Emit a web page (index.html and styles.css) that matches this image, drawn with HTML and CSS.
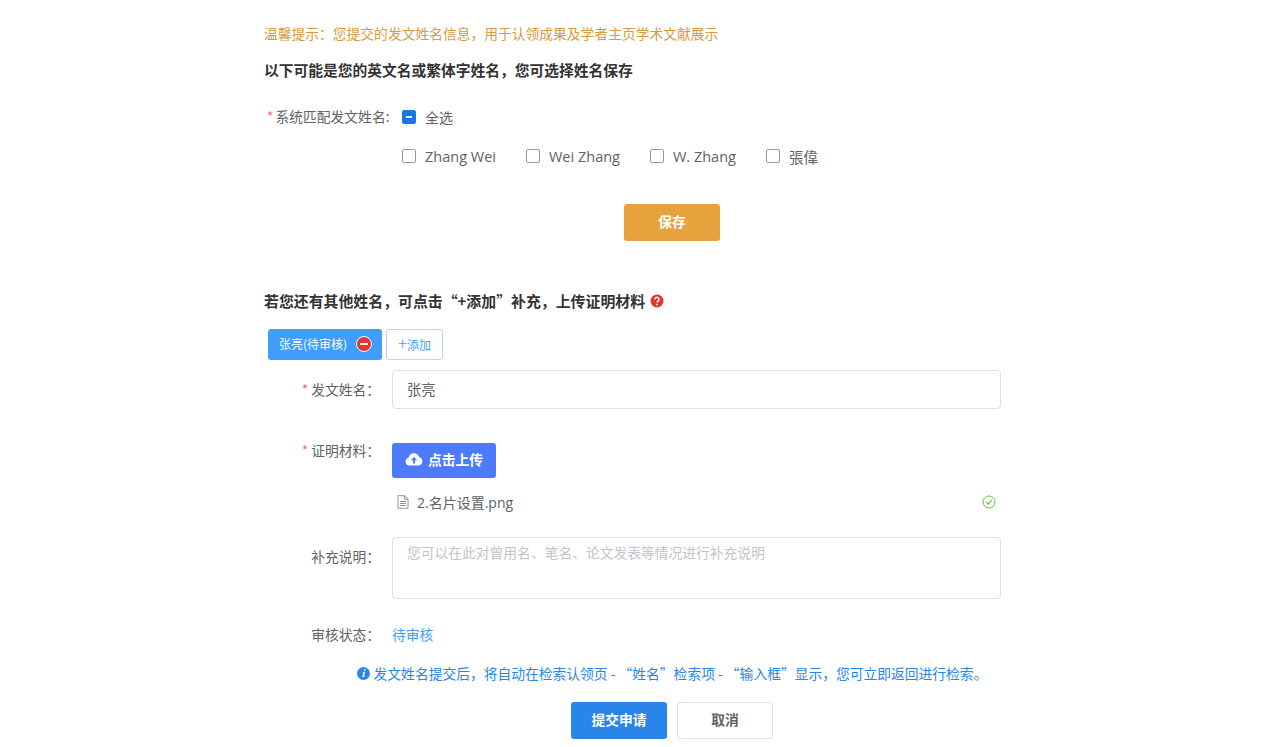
FILE: index.html
```html
<!DOCTYPE html>
<html lang="zh-CN">
<head>
  <meta charset="UTF-8">
  <meta name="viewport" content="width=device-width, initial-scale=1">
  <title>发文姓名</title>
  <link rel="stylesheet" href="styles.css">
</head>
<body>
  <div class="page">
    <p class="tip">温馨提示：您提交的发文姓名信息，用于认领成果及学者主页学术文献展示</p>
    <h2 class="title title-first">以下可能是您的英文名或繁体字姓名，您可选择姓名保存</h2>

    <div class="match-row">
      <div class="match-label"><span class="star">*</span> 系统匹配发文姓名:</div>
      <div class="match-body">
        <label class="check check-all"><span class="box box-on"></span>全选</label>
        <div class="check-list">
          <label class="check"><span class="box"></span>Zhang Wei</label>
          <label class="check"><span class="box"></span>Wei Zhang</label>
          <label class="check"><span class="box"></span>W. Zhang</label>
          <label class="check"><span class="box"></span>張偉</label>
        </div>
      </div>
    </div>

    <div class="btn-line btn-line-save">
      <button class="btn btn-save">保存</button>
    </div>

    <h2 class="title title-second">若您还有其他姓名，可点击“+添加”补充，上传证明材料
      <svg class="help" width="14" height="14" viewBox="0 0 14 14">
        <circle cx="7" cy="7" r="6.5" fill="#dd3730"/>
        <path d="M5 5.4a2 2 0 1 1 3.1 1.6c-.7.5-1.1.8-1.1 1.6" fill="none" stroke="#fff" stroke-width="1.5"/>
        <circle cx="7" cy="10.6" r=".9" fill="#fff"/>
      </svg>
    </h2>

    <div class="tabs">
      <div class="tab-active">张亮(待审核)
        <svg class="tab-del" width="16" height="16" viewBox="0 0 16 16">
          <circle cx="8" cy="8" r="7.5" fill="#dd3730" stroke="#fff"/>
          <rect x="4" y="7" width="8" height="2" rx="1" fill="#fff"/>
        </svg>
      </div>
      <button class="tab-add"><span class="plus">+</span>添加</button>
    </div>

    <div class="form-row row-name">
      <div class="form-label"><span class="star">*</span> 发文姓名：</div>
      <div class="field">
        <input class="input" type="text" value="张亮">
      </div>
    </div>

    <div class="form-row row-upload">
      <div class="form-label"><span class="star">*</span> 证明材料：</div>
      <div class="field">
        <button class="btn-upload">
          <svg width="18" height="14" viewBox="0 0 18 14">
            <path d="M4.4 13.5A3.9 3.9 0 0 1 3.6 5.8 5.4 5.4 0 0 1 14 4.9a4.4 4.4 0 0 1-.3 8.6z" fill="#fff"/>
            <path d="M9 4.8 5.9 8.2h2.1v3.2h2V8.200h2.100z" fill="#4c7bfb"/>
          </svg>
          点击上传
        </button>
        <div class="file-row">
          <svg width="12" height="14" viewBox="0 0 12 14" fill="none" stroke="#909399">
            <path d="M1 .7h6.500L11 4.200v9.100H1z"/>
            <path d="M7.500.7v3.500H11M3 6.500h6M3 8.500h6M3 10.500h6"/>
          </svg>
          <span class="file-name">2.名片设置.png</span>
          <svg class="file-ok" width="14" height="14" viewBox="0 0 14 14" fill="none" stroke="#67c23a">
            <circle cx="7" cy="7" r="6"/>
            <path d="M4.200 7.200 6.200 9.200 9.900 5.200" stroke-width="1.200"/>
          </svg>
        </div>
      </div>
    </div>

    <div class="form-row row-remark">
      <div class="form-label">补充说明：</div>
      <div class="field">
        <textarea class="textarea" placeholder="您可以在此对曾用名、笔名、论文发表等情况进行补充说明"></textarea>
      </div>
    </div>

    <div class="form-row row-status">
      <div class="form-label">审核状态：</div>
      <div class="field status-text">待审核</div>
    </div>

    <p class="note">
      <svg width="13" height="13" viewBox="0 0 13 13">
        <circle cx="6.500" cy="6.500" r="6.500" fill="#2a85e9"/>
        <path d="M7.100 2.300h1.500l-.3 1.400H6.800zM6.500 5h1.500l-1 4.200h.8l-.2.9H5.200l1-4.200h-.7z" fill="#fff"/>
      </svg>
      发文姓名提交后，将自动在检索认领页 - “姓名”检索项 - “输入框”显示，您可立即返回进行检索。
    </p>

    <div class="btn-line btn-line-submit">
      <button class="btn btn-submit">提交申请</button>
      <button class="btn btn-cancel">取消</button>
    </div>
  </div>
</body>
</html>
```

FILE: styles.css
```css
html, body {
  margin: 0;
  padding: 0;
  background: #fff;
  font-family: "Noto Sans CJK SC", "Open Sans", sans-serif;
  font-size: 13.77px;
  color: #606266;
  overflow: hidden;
}
button, input, textarea {
  font-family: inherit;
}
.page {
  width: 816px;
  margin-left: 264px;
  padding-top: 23px;
}
.tip {
  margin: 0;
  line-height: 20px;
  color: #d99a3c;
}
.title {
  margin: 0;
  font-size: 14.76px;
  line-height: 22px;
  font-weight: 700;
  color: #333;
}
.title-first {
  margin-top: 16px;
}
.title-second {
  margin-top: 49px;
  display: flex;
  align-items: center;
  gap: 5px;
  font-size: 14.9px;
}
.star {
  color: #f56c6c;
}

/* 系统匹配 */
.match-row {
  display: flex;
  margin-top: 26px;
}
.match-label {
  width: 138px;
  padding-left: 3px;
  box-sizing: border-box;
  line-height: 18px;
  white-space: nowrap;
}
.match-label .star {
  margin-right: -1px;
}
.match-body {
  display: flex;
  flex-direction: column;
  gap: 19px;
}
.check {
  display: flex;
  align-items: center;
  height: 20px;
  font-family: "Open Sans", "Noto Sans CJK SC", sans-serif;
  font-size: 14.5px;
  color: #606266;
}
.check-all {
  font-size: 14px;
}
.check-list {
  display: flex;
  gap: 30px;
}
.box {
  width: 12px;
  height: 12px;
  margin-right: 9px;
  border: 1px solid #999;
  border-radius: 2px;
  background: #fff;
  position: relative;
}
.box-on {
  background: #1677e6;
  border-color: #1677e6;
}
.box-on::after {
  content: "";
  position: absolute;
  left: 3px;
  top: 5px;
  width: 6px;
  height: 2px;
  background: #fff;
}

/* 按钮 */
.btn-line {
  display: flex;
  justify-content: center;
  gap: 10px;
}
.btn-line-save {
  margin-top: 38px;
}
.btn-line-submit {
  margin-top: 19px;
}
.btn {
  width: 96px;
  height: 37px;
  padding: 0 0 3px;
  border: 1px solid transparent;
  border-radius: 3px;
  font-size: 13.77px;
  font-weight: 700;
}
.btn-save {
  background: #e6a23c;
  color: #fff;
}
.btn-submit {
  background: #2a85e9;
  color: #fff;
}
.btn-cancel {
  background: #fff;
  border-color: #dcdfe6;
  color: #606266;
}

/* 标签页 */
.tabs {
  display: flex;
  gap: 4px;
  margin-top: 17px;
  margin-left: 4px;
}
.tab-active {
  display: flex;
  align-items: center;
  justify-content: space-between;
  box-sizing: border-box;
  width: 114px;
  height: 31px;
  padding: 0 10px 2px 11px;
  border-radius: 3px;
  background: #409eff;
  color: #fff;
  font-size: 12px;
}
.tab-add {
  box-sizing: border-box;
  width: 57px;
  height: 31px;
  padding: 0;
  border: 1px solid #b3d8ff;
  border-radius: 3px;
  background: #fff;
  color: #409eff;
  font-size: 12px;
}
.plus {
  font-size: 17px;
  line-height: 12px;
  font-weight: 300;
}

/* 表单 */
.form-row {
  display: flex;
}
.form-label {
  width: 128px;
  padding-right: 12px;
  box-sizing: border-box;
  text-align: right;
  white-space: nowrap;
}
.field {
  width: 609px;
}
.row-name {
  margin-top: 10px;
}
.row-name .form-label {
  line-height: 39px;
}
.input {
  display: block;
  box-sizing: border-box;
  width: 100%;
  height: 39px;
  padding: 0 14px 2px;
  border: 1px solid #dcdfe6;
  border-radius: 4px;
  outline: none;
  color: #606266;
  font-size: 14.3px;
}
.row-upload {
  margin-top: 34px;
}
.row-upload .form-label {
  line-height: 15px;
}
.btn-upload {
  display: flex;
  align-items: center;
  justify-content: center;
  gap: 5px;
  box-sizing: border-box;
  width: 104px;
  height: 35px;
  padding: 0 0 3px;
  border: 0;
  border-radius: 3px;
  background: #4c7bfb;
  color: #fff;
  font-size: 13.77px;
  font-weight: 700;
}
.file-row {
  display: flex;
  align-items: center;
  height: 24px;
  margin-top: 12px;
  padding: 0 5px;
}
.file-name {
  flex: 1;
  margin-left: 8px;
  font-family: "Open Sans", "Noto Sans CJK SC", sans-serif;
  font-size: 14px;
  color: #606266;
}
.row-remark {
  margin-top: 23px;
}
.row-remark .form-label {
  padding-top: 9px;
  line-height: 20px;
}
.textarea {
  display: block;
  box-sizing: border-box;
  width: 100%;
  height: 62px;
  padding: 4px 14px;
  border: 1px solid #dcdfe6;
  border-radius: 4px;
  outline: none;
  resize: none;
  font-size: 13.77px;
  line-height: 20px;
}
.textarea::placeholder {
  color: #c0c4cc;
}
.row-status {
  margin-top: 26px;
  line-height: 18px;
}
.status-text {
  color: #409eff;
}
.note {
  display: flex;
  align-items: center;
  justify-content: center;
  gap: 4px;
  margin: 20px 0 0;
  line-height: 20px;
  color: #2a85e9;
}
```
